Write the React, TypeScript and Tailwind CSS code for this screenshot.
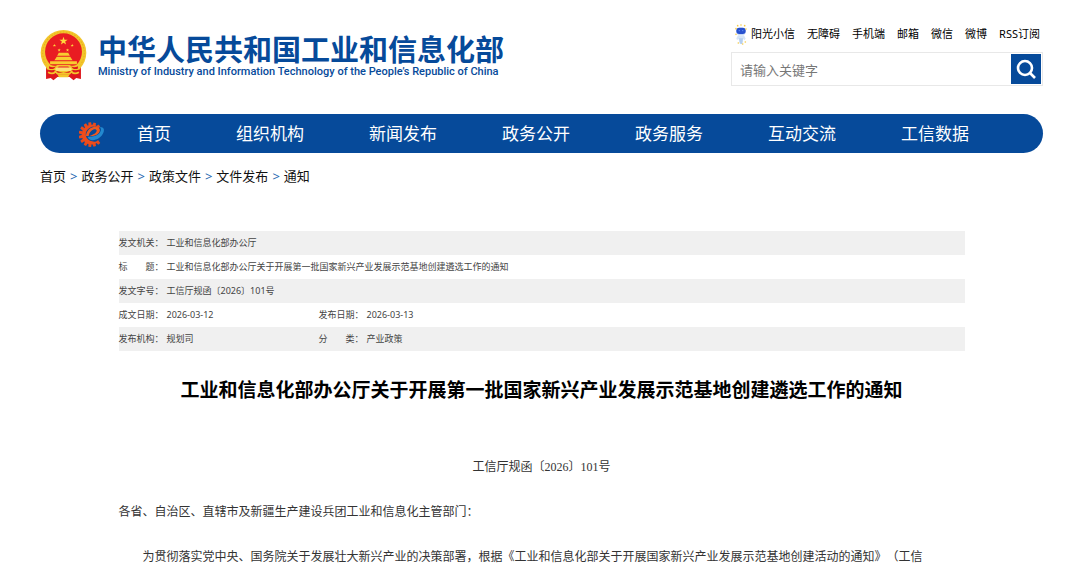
const TOP_LINKS = ['无障碍', '手机端', '邮箱', '微信', '微博', 'RSS订阅']

const NAV = ['首页', '组织机构', '新闻发布', '政务公开', '政务服务', '互动交流', '工信数据']

const CRUMBS = ['首页', '政务公开', '政策文件', '文件发布', '通知']

const TITLE = '工业和信息化部办公厅关于开展第一批国家新兴产业发展示范基地创建遴选工作的通知'

const META: Array<Array<{ label: string; value: string }>> = [
  [{ label: '发文机关：', value: '工业和信息化部办公厅' }],
  [{ label: '标　　题：', value: TITLE }],
  [{ label: '发文字号：', value: '工信厅规函〔2026〕101号' }],
  [
    { label: '成文日期：', value: '2026-03-12' },
    { label: '发布日期：', value: '2026-03-13' },
  ],
  [
    { label: '发布机构：', value: '规划司' },
    { label: '分　　类：', value: '产业政策' },
  ],
]

const STAR = 'M0-10 2.4-3.1 9.5-3.1 3.8 1.2 5.9 8.1 0 4-5.9 8.1-3.8 1.2-9.5-3.1-2.4-3.1Z'
const SMALL_STARS = ['translate(43 46) scale(.5)', 'translate(57 60) scale(.5)', 'translate(82 60) scale(.5)', 'translate(96 46) scale(.5)']
const TEETH = [48, 72, 96, 120, 144, 168, 192, 216, 240, 264, 288, 312]

function Emblem() {
  return (
    <svg viewBox="0 0 140 152" className="h-[51px] w-[47px] shrink-0" aria-hidden="true">
      <circle cx="70" cy="68" r="68" fill="#f3c62c" />
      <circle cx="70" cy="68" r="62" fill="none" stroke="#e6b020" strokeWidth="3" strokeDasharray="5 4" />
      <circle cx="70" cy="65" r="55" fill="#e91c22" />
      <path d="M18 112 50 122 70 128 90 122 122 112 122 146 108 143 100 150 88 140H52L40 150 32 143 18 146Z" fill="#de171d" />
      <path d={STAR} transform="translate(70 33) scale(1.3)" fill="#ffd93b" />
      {SMALL_STARS.map((t) => (
        <path key={t} d={STAR} transform={t} fill="#ffd93b" />
      ))}
      <path d="M56 68H84L89 77H51ZM50 80H90L97 90H43ZM30 93H110V102H30Z" fill="#f8cc30" />
      <path d="M18 98Q40 112 52 104H88Q100 112 122 98L120 117Q104 124 92 116L84 109H56L48 116Q36 124 20 117Z" fill="#f3c62c" />
      <path d="M27 108Q37 113 47 109L42 115Q34 118 27 115ZM113 108Q103 113 93 109L98 115Q106 118 113 115Z" fill="#de171d" />
      <rect x="46" y="112" width="48" height="10" rx="5" fill="#fbe27a" />
      <path d="M24 126Q38 134 46 124L52 130H88L94 124Q102 134 116 126" fill="none" stroke="#f3c62c" strokeWidth="5" />
      <path d="M52 132H88L84 141H56Z" fill="#f3c62c" />
    </svg>
  )
}

function GearLogo() {
  return (
    <svg viewBox="0 0 78 78" className="size-[26px] shrink-0" aria-hidden="true">
      <g fill="#e84a1c">
        {TEETH.map((a) => (
          <path key={a} d="M62 36 73 37V45L62 46Z" transform={`rotate(${a} 36 41)`} />
        ))}
      </g>
      <path d="M62 22C54 10 38 8 25 15C7 24 3 48 17 62C30 74 50 72 61 59C48 64 32 63 24 52C16 39 22 24 37 18C47 14 56 16 62 22Z" fill="#ee4c1b" />
      <path d="M21 45C22 27 39 15 53 18C67 21 65 35 53 41C46 45 37 46 31 46C42 41 54 36 53 28C50 20 32 26 29 45Z" fill="#ee5a20" />
      <path d="M26 47C44 49 60 42 65 30C67 25 65 22 62 19C73 18 77 24 74 33C68 50 50 60 36 57C30 55 27 51 26 47Z" fill="#2389cf" />
    </svg>
  )
}

function Mascot() {
  return (
    <svg viewBox="0 0 36 63" className="h-[21px] w-3 shrink-0" aria-hidden="true">
      <path d="M9 34H27L32 44 28 49 25 44 23 58H13L11 45 6 48 4 43Z" fill="#d6e5f7" />
      <path d="M12 43H24L21 60H16Z" fill="#b5cff0" />
      <rect x="3" y="11" width="30" height="22" rx="11" fill="#c4d8f8" />
      <rect x="4" y="11" width="28" height="19" rx="9" fill="#2750ce" />
      <path d="M11 20H15M21 20H25" stroke="#5a8cf0" strokeWidth="3" />
      <g fill="#f5cc4b">
        <circle cx="18" cy="3" r="2.5" />
        <circle cx="8" cy="5" r="2.5" />
        <circle cx="29" cy="5" r="2.5" />
        <circle cx="3" cy="14" r="2.5" />
        <circle cx="33" cy="15" r="2.5" />
        <circle cx="3" cy="31" r="2.5" />
        <circle cx="31" cy="54" r="2.5" />
        <circle cx="10" cy="57" r="2.5" />
        <circle cx="23" cy="60" r="2.5" />
      </g>
    </svg>
  )
}

function Header() {
  return (
    <header className="flex items-start justify-between pt-6">
      <a href="#" className="mt-[6px] flex items-center gap-[11px] text-[#064a9a]">
        <Emblem />
        <span className="flex flex-col whitespace-nowrap">
          <span className="text-[29px] leading-8 font-bold">中华人民共和国工业和信息化部</span>
          <span className="font-['Roboto',sans-serif] text-[11px] leading-3 font-medium">
            Ministry of Industry and Information Technology of the People’s Republic of China
          </span>
        </span>
      </a>
      <div className="w-[312px]">
        <div className="flex h-5 items-center justify-end gap-3 pr-[3px] text-[11px] whitespace-nowrap text-black">
          <a href="#" className="flex items-center gap-1">
            <Mascot />
            阳光小信
          </a>
          {TOP_LINKS.map((t) => (
            <a key={t} href="#">
              {t}
            </a>
          ))}
        </div>
        <form className="mt-2 flex h-[34px] items-center border border-[#e8e8e8] pr-px" onSubmit={(e) => e.preventDefault()}>
          <input
            type="text"
            aria-label="请输入关键字"
            placeholder="请输入关键字"
            className="h-full min-w-0 flex-1 px-2 pt-[2px] text-[13px] outline-none placeholder:text-[#777]"
          />
          <button type="submit" aria-label="搜索" className="flex size-[30px] items-center justify-center bg-[#064a9a]">
            <svg width="20" height="20" viewBox="0 0 20 20" fill="none" stroke="#fff" strokeWidth="2.6" aria-hidden="true">
              <circle cx="9" cy="9" r="7" />
              <path d="M14 14 19 19" />
            </svg>
          </button>
        </form>
      </div>
    </header>
  )
}

export default function App() {
  return (
    <div className="bg-white pr-[37px] pl-10 font-['Noto_Sans','Noto_Sans_CJK_SC',sans-serif] [text-spacing-trim:space-all]" lang="zh-CN">
      <Header />

      <nav className="mt-7 flex h-[39px] items-center rounded-full bg-[#064a9a] pl-[39px] text-white">
        <GearLogo />
        <ul className="ml-8 flex gap-[65px] text-[17px] whitespace-nowrap">
          {NAV.map((n) => (
            <li key={n}>
              <a href="#">{n}</a>
            </li>
          ))}
        </ul>
      </nav>

      <nav aria-label="当前位置" className="mt-3 flex gap-1 text-[13px] leading-[22px] text-[#111]">
        {CRUMBS.map((c, i) => (
          <span key={c} className="flex gap-1">
            {i > 0 && <span className="text-[#2467b0]">&gt;</span>}
            <a href="#">{c}</a>
          </span>
        ))}
      </nav>

      <main className="mx-auto mt-11 max-w-[846px]">
        <table className="w-full table-fixed text-left text-[9px] leading-3 text-[#444]">
          <colgroup>
            <col className="w-12" />
            <col className="w-[152px]" />
            <col className="w-12" />
            <col />
          </colgroup>
          <tbody>
            {META.map((row) => (
              <tr key={row[0].label} className="h-6 odd:bg-[#f0f0f0]">
                {row.map((m) => [
                  <th key={m.label} scope="row" className="p-0 font-normal whitespace-nowrap">
                    {m.label}
                  </th>,
                  <td key={m.value} colSpan={row.length === 1 ? 3 : 1} className="p-0">
                    {m.value}
                  </td>,
                ])}
              </tr>
            ))}
          </tbody>
        </table>

        <h1 className="mt-6 text-center text-[19px] leading-[30px] font-bold text-black">{TITLE}</h1>

        <article className="mt-10 font-['Liberation_Serif','Noto_Sans_CJK_SC',serif] text-[12px] leading-[45px] text-[#333]">
          <p className="text-center">工信厅规函〔2026〕101号</p>
          <p>各省、自治区、直辖市及新疆生产建设兵团工业和信息化主管部门：</p>
          <p className="indent-[2em]">
            为贯彻落实党中央、国务院关于发展壮大新兴产业的决策部署，根据《工业和信息化部关于开展国家新兴产业发展示范基地创建活动的通知》（工信
          </p>
        </article>
      </main>
    </div>
  )
}
